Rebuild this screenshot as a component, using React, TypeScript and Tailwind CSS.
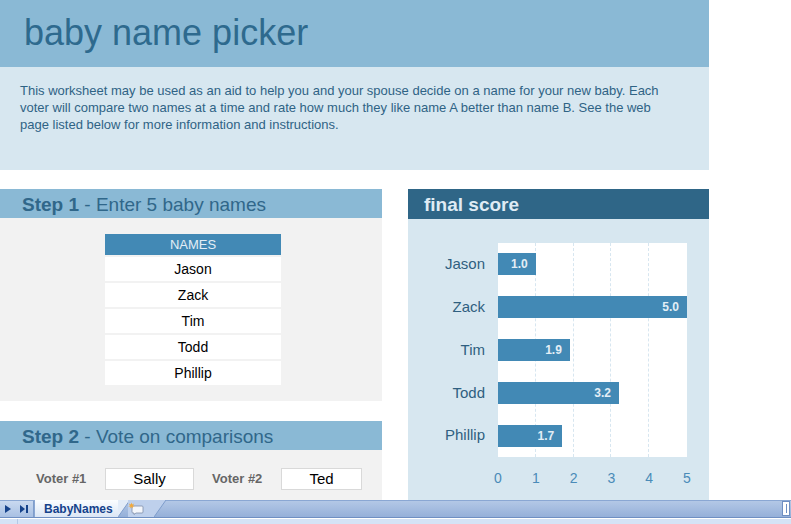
import React from 'react';

const names = ['Jason', 'Zack', 'Tim', 'Todd', 'Phillip'];

const scores = [
  { name: 'Jason', value: 1.0 },
  { name: 'Zack', value: 5.0 },
  { name: 'Tim', value: 1.9 },
  { name: 'Todd', value: 3.2 },
  { name: 'Phillip', value: 1.7 },
];

const UNIT = 37.8;

const StepHeader = ({ step, title }: { step: string; title: string }) => (
  <div className="h-[29px] bg-[#8ab9d5] pl-[22px] pt-[3px] flex items-center text-[19px] text-[#30678a]">
    <span className="font-bold">{step}</span>
    <span>&nbsp;- {title}</span>
  </div>
);

const FinalScore = () => (
  <div className="w-[301px] flex flex-col">
    <div className="h-[30px] bg-[#2f6687] pl-[16px] pt-[2px] flex items-center text-[19px] font-bold text-[#dfebf4]">
      final score
    </div>
    <div className="flex-1 bg-[#d7e7f0] pt-[24px]">
      <div className="flex">
        <div className="w-[90px] flex flex-col pr-[13px]">
          {scores.map(s => (
            <div key={s.name} className="h-[42.8px] flex items-center justify-end text-[15px] text-[#2f5f80]">
              {s.name}
            </div>
          ))}
        </div>
        <div className="relative w-[189px] h-[214px] bg-white">
          <div className="absolute inset-0 grid grid-cols-5">
            <div className="border-r border-dashed border-[#d7e6f0]" />
            <div className="border-r border-dashed border-[#d7e6f0]" />
            <div className="border-r border-dashed border-[#d7e6f0]" />
            <div className="border-r border-dashed border-[#d7e6f0]" />
            <div />
          </div>
          <div className="relative flex flex-col">
            {scores.map(s => (
              <div key={s.name} className="h-[42.8px] flex items-center">
                <div
                  className="h-[22px] bg-[#4289b5] flex items-center justify-end pr-[8px] text-[12px] font-bold text-[#e3eef6]"
                  style={{ width: s.value * UNIT }}
                >
                  {s.value.toFixed(1)}
                </div>
              </div>
            ))}
          </div>
        </div>
      </div>
      <div className="ml-[90px] w-[189px] mt-[11px] flex justify-between text-[14px] text-[#4a8bb8]">
        {[0, 1, 2, 3, 4, 5].map(n => (
          <div key={n} className="w-0 flex justify-center">
            <span>{n}</span>
          </div>
        ))}
      </div>
    </div>
  </div>
);

const SheetBar = () => (
  <div className="h-[24px] flex flex-col">
    <div className="h-[18px] flex items-end bg-gradient-to-b from-[#b3c8e6] to-[#95b0d9] border-t border-[#8aa7d3] border-b border-b-[#6f8fc2]">
      <div className="w-[34px] h-full flex items-center justify-center gap-[9px] border-r border-[#7f9dcb] bg-gradient-to-b from-[#c9d9f0] to-[#a8c0e3]">
        <svg width="6" height="8" viewBox="0 0 6 8"><path d="M0 0 L6 4 L0 8 Z" fill="#15428b" /></svg>
        <svg width="8" height="8" viewBox="0 0 8 8"><path d="M0 0 L5 4 L0 8 Z" fill="#15428b" /><rect x="6" y="0" width="2" height="8" fill="#15428b" /></svg>
      </div>
      <div className="h-[17px] flex items-center pl-[9px] pr-[6px] bg-gradient-to-b from-[#fbfdff] to-[#dbe6f5] text-[12px] font-bold text-[#15428b] border-l border-[#8aa7d3]">
        BabyNames
      </div>
      <svg width="12" height="17" viewBox="0 0 12 17" className="-ml-px">
        <path d="M0 0 L12 0 L0 17 Z" fill="#e3ecf8" />
        <path d="M12 0 L0 17" stroke="#7f9dcb" strokeWidth="1" />
      </svg>
      <div className="h-[17px] w-[26px] -ml-[2px] flex items-center bg-[#bed0ec]">
        <svg width="16" height="13" viewBox="0 0 16 13">
          <path d="M4 4 H14 a1 1 0 0 1 1 1 V10 a1 1 0 0 1 -1 1 H8 L6 12.5 V11 H5 a1 1 0 0 1 -1 -1 Z" fill="#f3f6fb" stroke="#7e8ea8" strokeWidth="0.8" />
          <path d="M3.5 0.5 L4.2 2.4 L6.2 1.6 L5 3.4 L6.8 4.5 L4.7 4.6 L4.8 6.6 L3.5 5 L2.2 6.6 L2.3 4.6 L0.2 4.5 L2 3.4 L0.8 1.6 L2.8 2.4 Z" fill="#f2a93b" />
        </svg>
      </div>
      <svg width="12" height="17" viewBox="0 0 12 17">
        <path d="M0 0 L12 0 L0 17 Z" fill="#bed0ec" />
        <path d="M12 0 L0 17" stroke="#7f9dcb" strokeWidth="1" />
      </svg>
      <div className="flex-1" />
      <div className="w-[8px] h-[15px] mb-px mr-px bg-white border border-[#6f8fc2] flex justify-center items-center">
        <div className="w-px h-[9px] bg-[#6f8fc2]" />
      </div>
    </div>
    <div className="flex-1 flex bg-[#d5e3f6] border-t border-white">
      <div className="w-[18px] border-r border-[#b4c8e6]" />
    </div>
  </div>
);

export default function App() {
  return (
    <div className="w-[791px] h-[524px] overflow-hidden bg-white flex flex-col font-['Liberation_Sans',Arial,sans-serif]">
      <div className="h-[500px] overflow-hidden flex flex-col">
        <div className="w-[709px] h-[67px] shrink-0 bg-[#8ab9d5] pl-[24px] flex items-center">
          <h1 className="text-[36px] leading-none text-[#2e6a8e] -mt-[1px]">baby name picker</h1>
        </div>
        <div className="w-[709px] h-[103px] shrink-0 bg-[#d7e7f0] px-[20px] pt-[15px] text-[13px] leading-[17px] text-[#2f6385]">
          <p>
            This worksheet may be used as an aid to help you and your spouse decide on a name for your new baby. Each
            <br />
            voter will compare two names at a time and rate how much they like name A better than name B. See the web
            <br />
            page listed below for more information and instructions.
          </p>
        </div>
        <div className="h-[19px] shrink-0" />
        <div className="flex-1 flex gap-[26px]">
          <div className="w-[382px] flex flex-col">
            <StepHeader step="Step 1" title="Enter 5 baby names" />
            <div className="h-[183px] bg-[#f2f2f2] pt-[16px]">
              <div className="ml-[105px] w-[176px] flex flex-col gap-[2px]">
                <div className="h-[21px] bg-[#4289b5] flex items-center justify-center text-[13px] text-[#e3eef6]">
                  NAMES
                </div>
                {names.map(n => (
                  <div key={n} className="h-[24px] bg-white flex items-center justify-center text-[14px] text-black">
                    {n}
                  </div>
                ))}
              </div>
            </div>
            <div className="h-[20px]" />
            <StepHeader step="Step 2" title="Vote on comparisons" />
            <div className="flex-1 bg-[#f2f2f2] pt-[18px] flex items-start">
              <div className="w-[105px] h-[22px] flex items-center pl-[36px] text-[13px] font-bold text-[#666666]">
                Voter #1
              </div>
              <div className="w-[89px] h-[22px] bg-white border border-[#d9d9d9] flex items-center justify-center text-[15px] text-black">
                Sally
              </div>
              <div className="w-[87px] h-[22px] flex items-center pl-[18px] text-[13px] font-bold text-[#666666]">
                Voter #2
              </div>
              <div className="w-[81px] h-[22px] bg-white border border-[#d9d9d9] flex items-center justify-center text-[15px] text-black">
                Ted
              </div>
            </div>
          </div>
          <FinalScore />
        </div>
      </div>
      <SheetBar />
    </div>
  );
}
